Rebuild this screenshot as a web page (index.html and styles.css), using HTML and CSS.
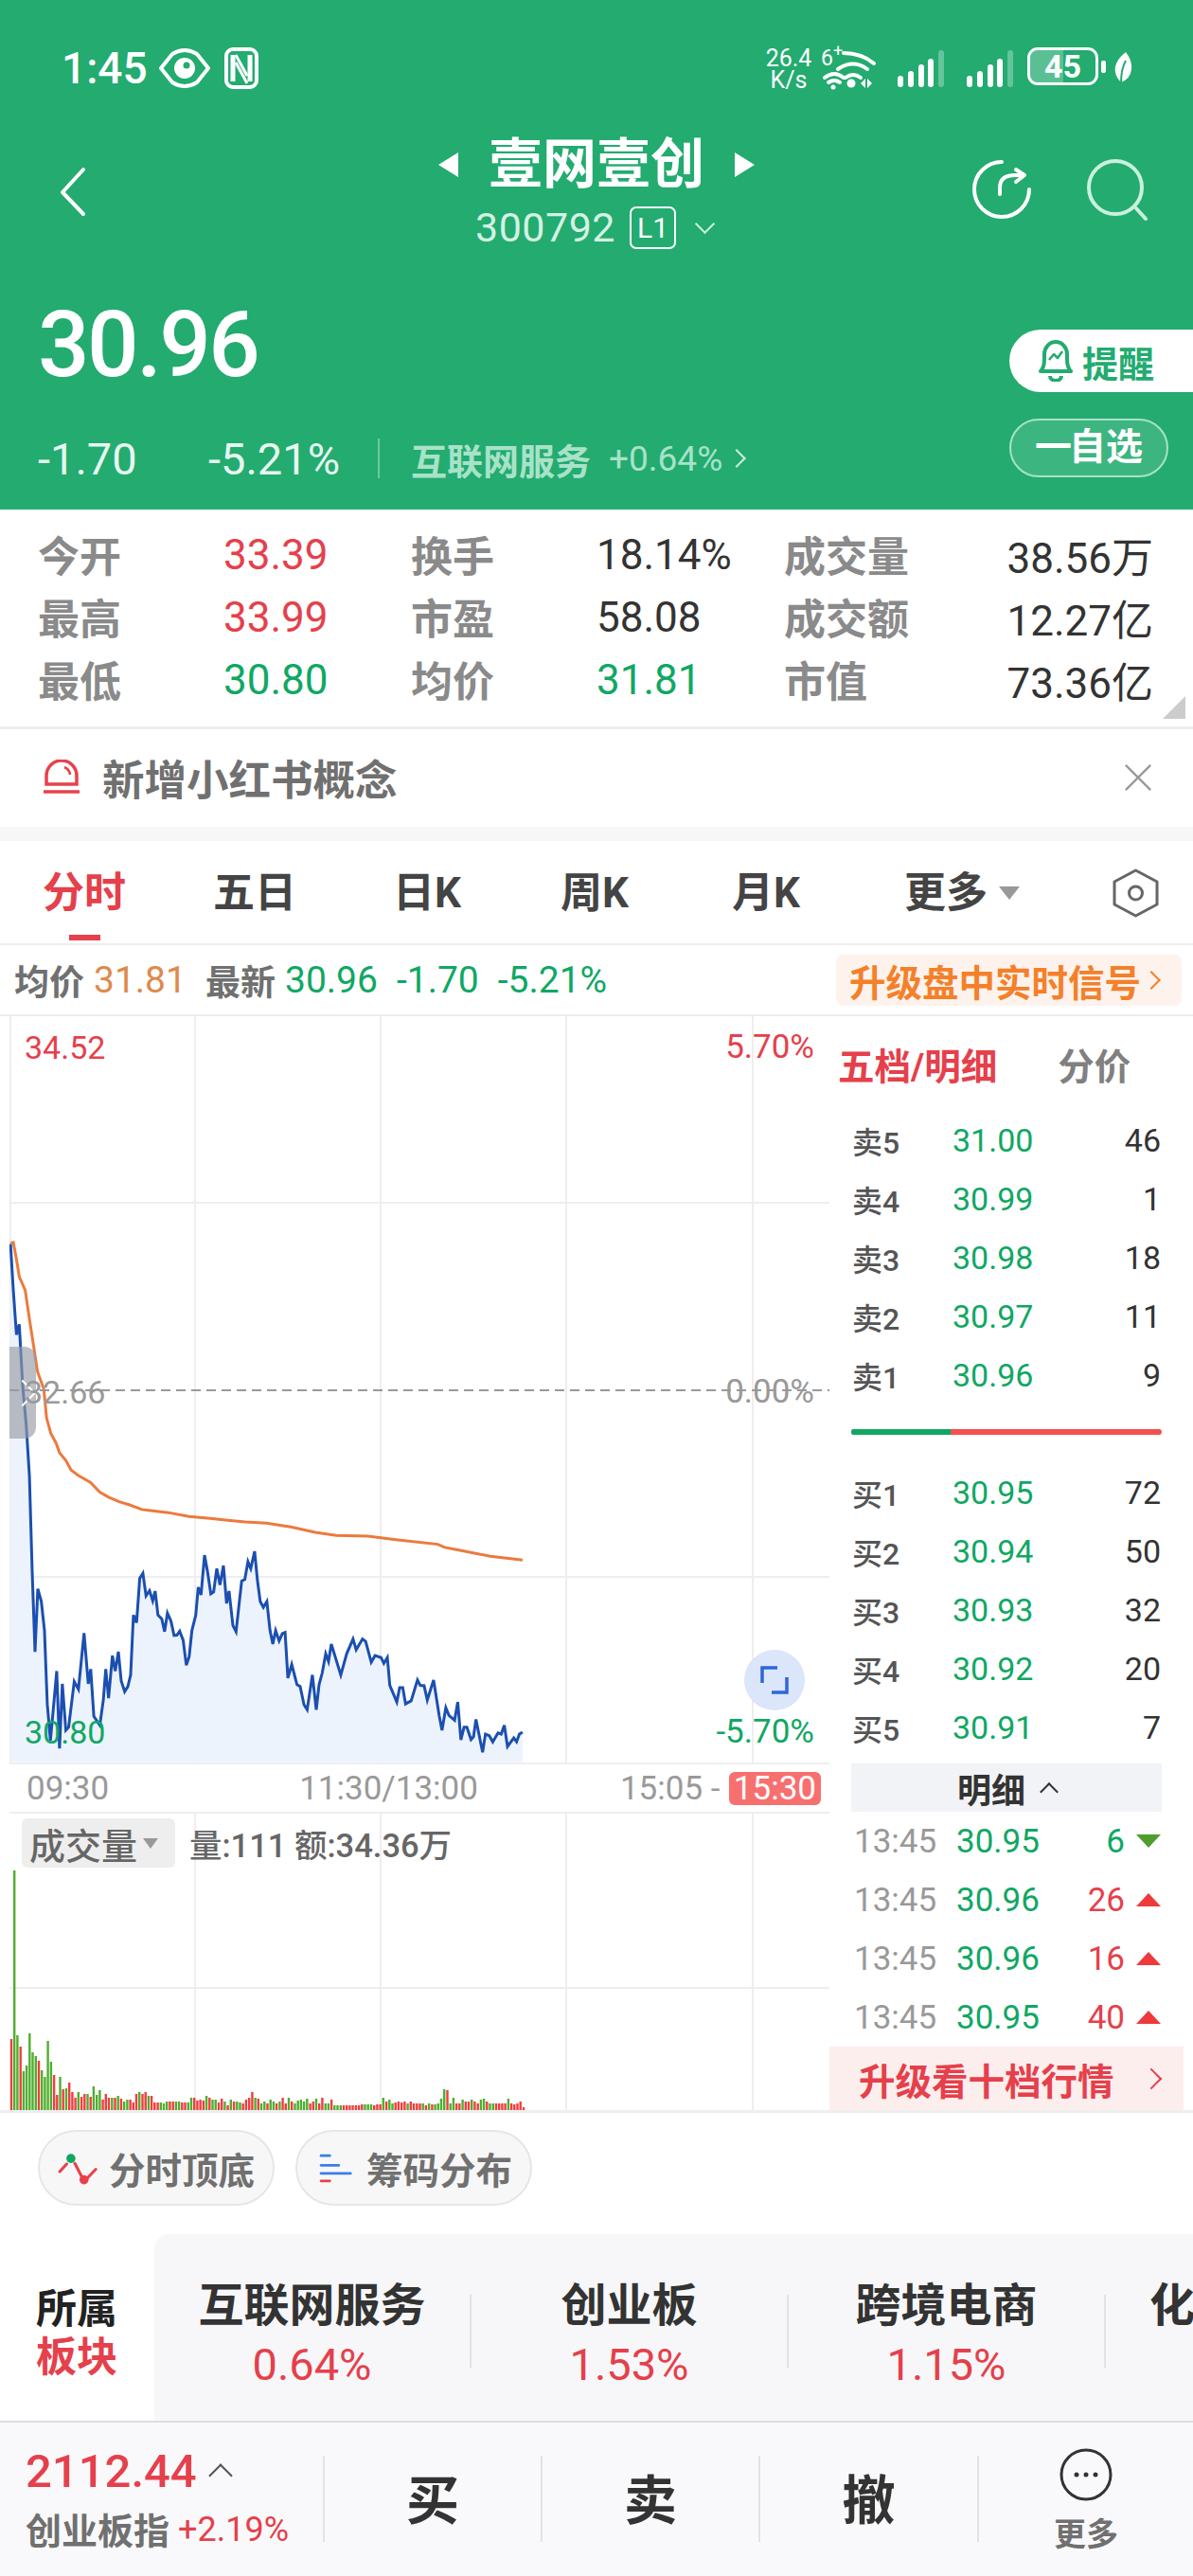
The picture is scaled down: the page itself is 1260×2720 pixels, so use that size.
FILE: index.html
```html
<!DOCTYPE html>
<html lang="zh-CN">
  <head>
    <meta charset="UTF-8" />
    <title>壹网壹创 300792</title>
    <link rel="stylesheet" href="styles.css">
  </head>
  <body>
    <div class="head">
      <div class="status">
        <div class="status-left">
          <span class="clock">1:45</span>
          <svg class="eye" viewBox="0 0 54 44"><path d="M2 22 L14 7 Q27 -1 40 7 L52 22 L40 37 Q27 45 14 37 Z" fill="none" stroke="#fff" stroke-width="4" stroke-linejoin="round"/><circle cx="27" cy="22" r="11" fill="#fff"/><circle cx="29" cy="19" r="3.5" fill="#23ab70"/></svg>
          <svg class="nfc" viewBox="0 0 36 44"><rect x="2" y="2" width="32" height="40" rx="7" fill="none" stroke="#fff" stroke-width="4"/><path d="M9 8 V36 M27 8 V36" stroke="#fff" stroke-width="5"/><path d="M12 8 L24 30 M12 16 L24 38" stroke="#fff" stroke-width="3"/></svg>
        </div>
        <div class="status-right">
          <div class="speed"><span>26.4</span><span>K/s</span></div>
          <div class="wifi">
            <span class="wifi-gen">6<sup>+</sup></span>
            <svg viewBox="868 48 62 48"><g fill="none" stroke="#fff" stroke-width="4" stroke-linecap="round"><path d="M893 54 Q912 54 925 65"/><path d="M887 71 Q903 60 918 71"/><path d="M895 80 Q903 74 911 80"/><path d="M873 80 Q883 72 893 80"/><path d="M877 85 Q883 81 889 85"/></g><circle cx="901" cy="86" r="4.5" fill="#fff"/><circle cx="882" cy="90" r="2.5" fill="#fff"/><path d="M911 86 L916 81 V91 Z M918 81 V91 L923 86 Z" fill="#fff"/></svg>
          </div>
          <svg class="signal" viewBox="0 0 49 40"><g fill="#fff"><rect x="0" y="27" width="6" height="12" rx="3"/><rect x="11" y="22" width="6" height="17" rx="3"/><rect x="22" y="15" width="6" height="24" rx="3"/><rect x="32" y="9" width="6" height="30" rx="3"/></g><rect x="43" y="0" width="6" height="39" rx="3" fill="#fff" opacity=".3"/></svg>
          <svg class="signal" viewBox="0 0 49 40"><g fill="#fff"><rect x="0" y="27" width="6" height="12" rx="3"/><rect x="11" y="22" width="6" height="17" rx="3"/><rect x="22" y="15" width="6" height="24" rx="3"/><rect x="32" y="9" width="6" height="30" rx="3"/></g><rect x="43" y="0" width="6" height="39" rx="3" fill="#fff" opacity=".3"/></svg>
          <div class="battery"><span class="battery-level"></span><span class="battery-text">45</span></div>
          <span class="battery-nub"></span>
          <svg class="leaf" viewBox="0 0 20 32"><path d="M13 0 Q20 9 19 18 Q18 28 8 32 Q0 24 2 15 Q4 7 13 0 Z" fill="#fff"/><path d="M8 32 Q8 18 13 9" fill="none" stroke="#23ab70" stroke-width="2"/></svg>
        </div>
      </div>

      <div class="nav">
        <svg class="back" viewBox="60 170 34 64"><path d="M88 179 L66 203 L88 226" fill="none" stroke="#fff" stroke-width="4" stroke-linecap="round" stroke-linejoin="round" /></svg>
        <div class="nav-title">
          <div class="title-row"><i class="tri-left"></i><h1>壹网壹创</h1><i class="tri-right"></i></div>
          <div class="code-row"><span class="code">300792</span><span class="level">L1</span><i class="caret-down"></i></div>
        </div>
        <div class="nav-icons">
          <svg class="share" viewBox="1023 166 70 70"><g fill="none" stroke="#fff" stroke-width="4" stroke-linecap="round" stroke-linejoin="round"><path d="M1058 172 A29 29 0 1 0 1087 201"/><path d="M1056 206 V199 Q1056 186 1072 186 H1081"/><path d="M1073 180 L1082 186 L1073 193"/></g></svg>
          <svg class="search" viewBox="1145 165 72 72"><g fill="none" stroke="#c9f0de" stroke-width="4" stroke-linecap="round"><circle cx="1178" cy="198" r="28"/><path d="M1200 220 L1210 231"/></g></svg>
        </div>
      </div>

      <div class="quote">
        <div>
          <div class="price">30.96</div>
          <div class="change-row">
            <span class="change">-1.70</span>
            <span class="change change-pct">-5.21%</span>
            <span class="change-sep"></span>
            <span class="board">互联网服务</span>
            <span class="board-pct">+0.64%</span>
            <i class="chev board-chev"></i>
          </div>
        </div>
        <div class="quote-btns">
          <div class="btn-alert">
            <svg viewBox="0 0 36 44"><g fill="none" stroke="#23ab70" stroke-width="4" stroke-linejoin="round"><path d="M2 33 Q6 29 6 20 V15 A12 13 0 0 1 30 15 V20 Q30 29 34 33 Z"/><path d="M12 38 A6 5 0 0 0 24 38"/><path d="M11 21 L16 15 L20 19 L25 12" stroke-width="2.5"/></g></svg>
            <span>提醒</span>
          </div>
          <div class="btn-watch"><span class="watch-dash">一</span>自选</div>
        </div>
      </div>
    </div>

    <div class="stats">
      <span class="stat-name">今开</span><span class="stat-val up">33.39</span>
      <span class="stat-name">换手</span><span class="stat-val">18.14%</span>
      <span class="stat-name">成交量</span><span class="stat-val stat-end">38.56万</span>
      <span class="stat-name">最高</span><span class="stat-val up">33.99</span>
      <span class="stat-name">市盈</span><span class="stat-val">58.08</span>
      <span class="stat-name">成交额</span><span class="stat-val stat-end">12.27亿</span>
      <span class="stat-name">最低</span><span class="stat-val down">30.80</span>
      <span class="stat-name">均价</span><span class="stat-val down">31.81</span>
      <span class="stat-name">市值</span><span class="stat-val stat-end">73.36亿</span>
      <i class="stats-corner"></i>
    </div>

    <div class="notice">
      <svg viewBox="44 804 42 38"><g fill="none" stroke="#e8414a" stroke-width="3.5"><path d="M49 830 V821 A16 16 0 0 1 81 821 V830 Z"/><path d="M68 812 A10 10 0 0 1 74 820" stroke-width="2.5"/><path d="M46 838 H84"/></g></svg>
      <span>新增小红书概念</span>
      <svg class="notice-close" viewBox="0 0 32 32"><path d="M2 2 L30 30 M30 2 L2 30" stroke="#999" stroke-width="2.5"/></svg>
    </div>

    <div class="band"></div>

    <div class="tabs">
      <span class="tab tab-active">分时</span>
      <span class="tab">五日</span>
      <span class="tab">日K</span>
      <span class="tab">周K</span>
      <span class="tab">月K</span>
      <span class="tab tab-more">更多<i class="tri-down"></i></span>
      <svg class="tab-gear" viewBox="1174 917 50 52"><g fill="none" stroke="#666" stroke-width="3"><path d="M1198.5 919 L1221 931 V955 L1198.5 967 L1176 955 V931 Z" stroke-linejoin="round"/><circle cx="1198.5" cy="943" r="7"/></g></svg>
    </div>

    <div class="info">
      <span class="info-name">均价</span><span class="info-val avg">31.81</span>
      <span class="info-name info-latest">最新</span><span class="info-val down">30.96</span>
      <span class="info-val down info-gap">-1.70</span>
      <span class="info-val down info-gap">-5.21%</span>
      <span class="upsell">升级盘中实时信号<i class="chev"></i></span>
    </div>

    <div class="market">
      <div class="market-left">
        <div class="price-chart">
          <svg viewBox="0 0 866 790" width="866" height="790">
            <g stroke="#eeeef0" stroke-width="2">
              <path d="M1 0 V790 M196 0 V790 M392 0 V790 M588 0 V790 M785 0 V790"/>
              <path d="M0 197 H866 M0 592 H866 M0 789 H866"/>
            </g>
            <g transform="translate(-10,167) scale(.3699,.40816)">
              <polygon id="priceFill" fill="#edf3fc" stroke="none"></polygon>
              <polyline id="priceLine" fill="none" stroke="#1b4fb0" stroke-width="3" vector-effect="non-scaling-stroke" points="30,180 38,300 47,415 55,388 65,550 75,650 84,780 92,1030 100,1235 108,1072 118,1105 127,1180 135,1370 144,1465 152,1385 162,1285 170,1485 178,1318 188,1438 196,1430 212,1312 224,1332 240,1187 252,1318 259,1280 268,1402 285,1425 295,1360 302,1280 310,1355 321,1245 329,1285 338,1235 346,1310 356,1338 365,1325 373,1295 381,1140 390,1160 399,1045 408,1032 417,1090 427,1077 436,1103 443,1078 451,1140 462,1150 470,1183 478,1135 488,1155 497,1193 505,1192 513,1182 523,1205 532,1270 540,1248 548,1180 559,1140 566,1068 574,1088 584,985 592,1025 602,1085 610,1080 619,1020 628,1062 638,1012 647,1110 654,1078 665,1167 674,1183 690,1052 699,1048 708,1002 716,1020 727,975 735,1050 743,1105 752,1120 762,1105 771,1180 779,1215 787,1180 797,1207 806,1188 814,1185 822,1303 833,1268 848,1320 857,1325 868,1372 877,1385 892,1295 903,1385 911,1320 920,1290 930,1240 938,1260 946,1215 973,1295 990,1240 1008,1202 1017,1230 1035,1202 1044,1208 1060,1262 1071,1245 1088,1250 1096,1265 1106,1250 1113,1322 1133,1365 1141,1328 1150,1328 1158,1370 1174,1362 1192,1308 1200,1322 1211,1323 1220,1360 1238,1308 1254,1400 1262,1438 1273,1380 1282,1400 1298,1412 1307,1365 1316,1463 1325,1430 1333,1430 1345,1462 1352,1455 1359,1410 1378,1495 1386,1448 1397,1452 1407,1468 1422,1445 1431,1448 1440,1425 1449,1480 1467,1458 1475,1468 1483,1448 1492,1443"></polyline>
              <polyline fill="none" stroke="#ec7a3e" stroke-width="3" vector-effect="non-scaling-stroke" points="30,178 38,176 47,220 55,265 72,300 85,380 97,450 107,510 125,555 133,630 145,670 160,695 170,720 188,740 203,765 225,780 258,797 285,822 310,835 340,847 370,855 405,867 430,870 480,875 540,885 600,890 650,895 700,899 760,902 830,912 900,926 960,934 1050,936 1130,945 1250,957 1270,965 1300,970 1400,988 1492,998"></polyline>
            </g>
            <path d="M0 395 H866" stroke="#999" stroke-width="2" stroke-dasharray="10 6"/>
          </svg>
          <div class="chart-handle"><i class="chev"></i></div>
          <span class="chart-label label-top-left up">34.52</span>
          <span class="chart-label label-top-right up">5.70%</span>
          <span class="chart-label label-mid-left">32.66</span>
          <span class="chart-label label-mid-right">0.00%</span>
          <span class="chart-label label-low-left down">30.80</span>
          <span class="chart-label label-low-right down">-5.70%</span>
          <div class="chart-expand">
            <svg viewBox="0 0 30 30"><path d="M2 18 V2 H18 M28 12 V28 H12" fill="none" stroke="#2f66d8" stroke-width="3.5"/></svg>
          </div>
        </div>

        <div class="axis">
          <span>09:30</span>
          <span class="axis-mid">11:30/13:00</span>
          <span class="axis-end">15:05 -</span>
          <span class="axis-badge">15:30</span>
        </div>

        <div class="vol-chart">
          <svg id="volChart" viewBox="0 0 866 315" width="866" height="315">
            <g stroke="#eeeef0" stroke-width="2">
              <path d="M196 0 V315 M392 0 V315 M588 0 V315 M785 0 V315"/>
              <path d="M0 1 H866 M0 186 H866"/>
            </g>
          </svg>
          <div class="vol-label">
            <span class="vol-pill">成交量<i class="tri-down"></i></span>
            <span class="vol-text">量:111 额:34.36万</span>
          </div>
        </div>
      </div>

      <div class="depth">
        <div class="depth-head"><span class="depth-active">五档/明细</span><span class="depth-other">分价</span></div>
        <div class="depth-row"><span class="depth-name">卖5</span><span class="depth-price">31.00</span><span class="depth-qty">46</span></div>
        <div class="depth-row"><span class="depth-name">卖4</span><span class="depth-price">30.99</span><span class="depth-qty">1</span></div>
        <div class="depth-row"><span class="depth-name">卖3</span><span class="depth-price">30.98</span><span class="depth-qty">18</span></div>
        <div class="depth-row"><span class="depth-name">卖2</span><span class="depth-price">30.97</span><span class="depth-qty">11</span></div>
        <div class="depth-row"><span class="depth-name">卖1</span><span class="depth-price">30.96</span><span class="depth-qty">9</span></div>
        <div class="depth-bar"><span class="depth-bar-sell"></span></div>
        <div class="depth-row"><span class="depth-name">买1</span><span class="depth-price">30.95</span><span class="depth-qty">72</span></div>
        <div class="depth-row"><span class="depth-name">买2</span><span class="depth-price">30.94</span><span class="depth-qty">50</span></div>
        <div class="depth-row"><span class="depth-name">买3</span><span class="depth-price">30.93</span><span class="depth-qty">32</span></div>
        <div class="depth-row"><span class="depth-name">买4</span><span class="depth-price">30.92</span><span class="depth-qty">20</span></div>
        <div class="depth-row"><span class="depth-name">买5</span><span class="depth-price">30.91</span><span class="depth-qty">7</span></div>
        <div class="detail-head">明细<i class="chev chev-up"></i></div>
        <div class="tick-row"><span class="tick-time">13:45</span><span class="tick-price">30.95</span><span class="tick-qty down">6</span><i class="tick-down"></i></div>
        <div class="tick-row"><span class="tick-time">13:45</span><span class="tick-price">30.96</span><span class="tick-qty up">26</span><i class="tick-up"></i></div>
        <div class="tick-row"><span class="tick-time">13:45</span><span class="tick-price">30.96</span><span class="tick-qty up">16</span><i class="tick-up"></i></div>
        <div class="tick-row"><span class="tick-time">13:45</span><span class="tick-price">30.95</span><span class="tick-qty up">40</span><i class="tick-up"></i></div>
        <div class="depth-upsell"><span>升级看十档行情</span><i class="chev"></i></div>
      </div>
    </div>

    <div class="pills">
      <div class="pill">
        <svg viewBox="85 95 130 100"><g fill="none" stroke="#e8414a" stroke-width="9" stroke-linecap="round"><path d="M94 155 L115 132"/><path d="M140 130 L165 178"/><path d="M177 176 L204 148"/></g><circle cx="128" cy="115" r="14" fill="#10a764"/><circle cx="168" cy="180" r="14" fill="#e8414a"/></svg>
        <span>分时顶底</span>
      </div>
      <div class="pill">
        <svg viewBox="880 90 125 110"><g fill="none" stroke-width="9" stroke-linecap="round"><path d="M894 103 H923 M894 135 H953 M894 162 H992" stroke="#3b7de8"/><path d="M894 187 H923" stroke="#e8414a"/></g></svg>
        <span>筹码分布</span>
      </div>
    </div>

    <div class="sector">
      <div class="sector-label"><span>所属</span><span class="sector-red">板块</span></div>
      <div class="sector-panel">
        <div class="sector-item"><div class="sector-name">互联网服务</div><div class="sector-pct">0.64%</div></div>
        <i class="sector-sep"></i>
        <div class="sector-item"><div class="sector-name">创业板</div><div class="sector-pct">1.53%</div></div>
        <i class="sector-sep"></i>
        <div class="sector-item"><div class="sector-name">跨境电商</div><div class="sector-pct">1.15%</div></div>
        <i class="sector-sep"></i>
        <div class="sector-name sector-cut">化</div>
      </div>
    </div>

    <div class="bottom">
      <div class="bottom-index">
        <div class="index-row"><span class="index-val">2112.44</span><i class="chev chev-up"></i></div>
        <div class="index-row"><span class="index-name">创业板指</span><span class="index-pct">+2.19%</span></div>
      </div>
      <div class="bottom-act">买</div>
      <div class="bottom-act">卖</div>
      <div class="bottom-act">撤</div>
      <div class="bottom-more">
        <svg viewBox="0 0 56 56"><circle cx="28" cy="28" r="26" fill="none" stroke="#333" stroke-width="3"/><circle cx="18" cy="28" r="2.5" fill="#333"/><circle cx="28" cy="28" r="2.5" fill="#333"/><circle cx="38" cy="28" r="2.5" fill="#333"/></svg>
        <span>更多</span>
      </div>
    </div>

    <script src="chart.js"></script>
  </body>
</html>
```

FILE: styles.css
```css
* {
  margin: 0;
  padding: 0;
  box-sizing: border-box;
}
body {
  width: 1260px;
  background: white;
  color: #333;
  font-family: Roboto, "Noto Sans CJK SC", sans-serif;
}
i {
  display: block;
  font-style: normal;
}
svg {
  display: block;
  flex: none;
}
.up {
  color: #e5404b;
}
.down {
  color: #10a764;
}

/* small shapes used all over */
.chev {
  width: 14px;
  height: 14px;
  border-top: 2.5px solid currentColor;
  border-right: 2.5px solid currentColor;
  transform: rotate(45deg);
}
.chev-up {
  transform: rotate(-45deg);
}
.tri-left,
.tri-right {
  width: 0;
  height: 0;
  border-top: 13px solid transparent;
  border-bottom: 13px solid transparent;
}
.tri-left {
  border-right: 21px solid white;
}
.tri-right {
  border-left: 21px solid white;
}
.tri-down {
  width: 0;
  height: 0;
  border-left: 11px solid transparent;
  border-right: 11px solid transparent;
  border-top: 14px solid #999;
}

/* green header */
.head {
  height: 538px;
  background: #23ab70;
  color: white;
}
.status {
  height: 144px;
  padding: 48px 64px 0 65px;
  display: flex;
  justify-content: space-between;
  align-items: flex-start;
}
.status-left {
  display: flex;
  align-items: center;
  height: 48px;
}
.clock {
  font-size: 46px;
  font-weight: 500;
  line-height: 48px;
  width: 103px;
}
.eye {
  width: 54px;
  height: 44px;
}
.nfc {
  width: 36px;
  height: 44px;
  margin-left: 15px;
}
.status-right {
  display: flex;
  align-items: flex-start;
  margin-top: 2px;
}
.speed {
  width: 54px;
  display: flex;
  flex-direction: column;
  align-items: center;
  font-size: 25px;
  line-height: 23px;
}
.wifi {
  display: flex;
  margin-left: 6px;
  position: relative;
}
.wifi svg {
  width: 62px;
  height: 48px;
}
.wifi-gen {
  position: absolute;
  left: 1px;
  top: 0;
  font-size: 23px;
  line-height: 24px;
}
.wifi-gen sup {
  font-size: 18px;
  line-height: 0;
}
.signal {
  width: 49px;
  height: 40px;
  margin-top: 3px;
  margin-left: 20px;
}
.signal + .signal {
  margin-left: 24px;
}
.battery {
  position: relative;
  width: 75px;
  height: 40px;
  margin-left: 15px;
  border: 3px solid white;
  border-radius: 11px;
  overflow: hidden;
}
.battery-level {
  display: block;
  width: 50%;
  height: 100%;
  background: rgba(255, 255, 255, 0.25);
}
.battery-text {
  position: absolute;
  top: 0;
  left: 0;
  right: 0;
  text-align: center;
  font-size: 34px;
  font-weight: 700;
  line-height: 34px;
}
.battery-nub {
  width: 5px;
  height: 13px;
  margin: 14px 0 0 3px;
  background: white;
  border-radius: 2px;
}
.leaf {
  width: 20px;
  height: 32px;
  margin: 5px 0 0 8px;
}
.nav {
  height: 126px;
  display: grid;
  grid-template-columns: 1fr auto 1fr;
}
.back {
  width: 34px;
  height: 64px;
  margin: 26px 0 0 60px;
}
.title-row {
  display: flex;
  align-items: center;
  justify-content: center;
  gap: 32px;
  height: 60px;
}
.title-row h1 {
  font-size: 57px;
  font-weight: 700;
  line-height: 60px;
}
.code-row {
  display: flex;
  align-items: center;
  justify-content: center;
  height: 48px;
  margin-top: 12px;
  margin-left: -6px;
}
.code {
  font-size: 43px;
  letter-spacing: 0.5px;
  color: #d4f1e3;
}
.level {
  width: 49px;
  height: 45px;
  margin-left: 15px;
  border: 2px solid white;
  border-radius: 7px;
  font-size: 30px;
  line-height: 41px;
  text-align: center;
}
.caret-down {
  width: 15px;
  height: 15px;
  margin: -8px 0 0 23px;
  border-right: 2px solid #d4f1e3;
  border-bottom: 2px solid #d4f1e3;
  transform: rotate(45deg);
}
.nav-icons {
  display: flex;
  justify-content: flex-end;
  padding: 21px 43px 0 0;
  gap: 52px;
}
.share,
.search {
  width: 70px;
  height: 70px;
}
.search {
  width: 72px;
  height: 72px;
}
.quote {
  height: 268px;
  display: flex;
  justify-content: space-between;
}
.price {
  margin: 46px 0 0 40px;
  font-size: 96px;
  font-weight: 500;
  line-height: 96px;
  letter-spacing: -2.5px;
}
.change-row {
  display: flex;
  align-items: center;
  height: 44px;
  margin: 50px 0 0 40px;
}
.change {
  font-size: 47px;
  color: #e6f7ef;
  width: 180px;
}
.change-pct {
  width: 179px;
}
.change-sep {
  width: 2px;
  height: 42px;
  background: rgba(255, 255, 255, 0.35);
}
.board {
  margin-left: 33px;
  font-size: 38px;
  font-weight: 700;
  color: #a8e2c8;
}
.board-pct {
  margin-left: 19px;
  font-size: 37px;
  color: #a8e2c8;
}
.board-chev {
  margin-left: 8px;
  color: #c9f0de;
}
.quote-btns {
  width: 194px;
  padding-top: 78px;
}
.btn-alert {
  display: flex;
  align-items: center;
  height: 66px;
  padding-left: 31px;
  background: white;
  border-radius: 33px 0 0 33px;
  color: #23ab70;
  font-size: 38px;
  font-weight: 700;
}
.btn-alert svg {
  width: 36px;
  height: 44px;
  margin-right: 10px;
}
.btn-watch {
  width: 168px;
  height: 62px;
  margin-top: 28px;
  border: 2px solid #a8e2c8;
  border-radius: 31px;
  background: rgba(255, 255, 255, 0.12);
  font-size: 39px;
  font-weight: 700;
  line-height: 56px;
  text-align: center;
}
.watch-dash {
  letter-spacing: -3px;
}

/* stats table */
.stats {
  position: relative;
  height: 232px;
  padding: 14px 42px 0 40px;
  display: grid;
  grid-template-columns: 196px 198px 196px 198px 196px 1fr;
  grid-auto-rows: 66px;
  align-items: center;
  border-bottom: 3px solid #eeeeee;
}
.stat-name {
  font-size: 44px;
  font-weight: 700;
  color: #8a8a8a;
}
.stat-val {
  margin-top: 2px;
  font-size: 44px;
  color: #333;
  white-space: nowrap;
}
.stat-val.up {
  color: #e5404b;
}
.stat-val.down {
  color: #10a764;
}
.stat-end {
  justify-self: end;
}
.stats-corner {
  position: absolute;
  right: 8px;
  bottom: 8px;
  width: 0;
  height: 0;
  border-left: 24px solid transparent;
  border-bottom: 24px solid #cccccc;
}

.notice {
  height: 103px;
  display: flex;
  align-items: center;
  padding: 0 43px 2px 44px;
  font-size: 44.5px;
  font-weight: 700;
  color: #707070;
}
.notice svg {
  width: 42px;
  height: 38px;
}
.notice span {
  margin-left: 22px;
}
.notice svg.notice-close {
  width: 30px;
  height: 30px;
  margin-left: auto;
}
.band {
  height: 15px;
  background: #f7f7f7;
}

/* period tabs */
.tabs {
  height: 110px;
  display: grid;
  grid-template-columns: 180px 190px 177px 181px 182px 220px auto;
  align-items: center;
  padding: 2px 0 0 45px;
  border-bottom: 2px solid #eeeeee;
}
.tab {
  position: relative;
  font-size: 44px;
  font-weight: 700;
  color: #444;
  line-height: 60px;
}
.tab-active {
  color: #e5404b;
}
.tab-active::after {
  content: "";
  position: absolute;
  left: 28px;
  top: 74px;
  width: 33px;
  height: 6px;
  background: #e5404b;
}
.tab-more {
  display: flex;
  align-items: center;
}
.tab-more .tri-down {
  margin-left: 12px;
}
.tab-gear {
  width: 50px;
  height: 52px;
}

.info {
  height: 73px;
  display: flex;
  align-items: center;
  padding-left: 15px;
}
.info-name {
  font-size: 37px;
  font-weight: 700;
  color: #707070;
}
.info-val {
  margin-left: 10px;
  font-size: 39px;
}
.avg {
  color: #dd8a4c;
}
.info-latest {
  margin-left: 20px;
}
.info-gap {
  margin-left: 20px;
}
.upsell {
  display: flex;
  align-items: center;
  width: 365px;
  height: 54px;
  margin: 0 12px 0 auto;
  padding: 0 0 0 14px;
  background: #fdf3ec;
  border-radius: 8px;
  color: #f4802a;
  font-size: 38.5px;
  font-weight: 700;
}
.upsell .chev {
  margin-left: 4px;
}

/* chart area */
.market {
  display: flex;
  padding-left: 10px;
  border-top: 2px solid #eeeeee;
}
.market-left {
  width: 866px;
}
.price-chart {
  position: relative;
  height: 790px;
  overflow: hidden;
}
.chart-label {
  position: absolute;
  font-size: 34px;
  line-height: 40px;
  color: #999;
}
.chart-label.up {
  color: #e5404b;
}
.chart-label.down {
  color: #10a764;
}
.label-top-left,
.label-mid-left,
.label-low-left {
  left: 16px;
}
.label-top-right,
.label-mid-right,
.label-low-right {
  right: 16px;
  font-size: 35px;
}
.label-top-left,
.label-top-right {
  top: 13px;
}
.label-mid-left,
.label-mid-right {
  top: 377px;
}
.label-low-left,
.label-low-right {
  top: 736px;
}
.chart-handle {
  position: absolute;
  left: 0;
  top: 349px;
  width: 28px;
  height: 97px;
  display: flex;
  align-items: center;
  justify-content: center;
  background: rgba(150, 155, 165, 0.65);
  border-radius: 0 12px 12px 0;
  color: white;
}
.chart-handle .chev {
  width: 20px;
  height: 20px;
  border-width: 2px;
}
.chart-expand {
  position: absolute;
  left: 776px;
  top: 669px;
  width: 64px;
  height: 64px;
  display: flex;
  align-items: center;
  justify-content: center;
  border-radius: 50%;
  background: #dbe6fb;
}
.chart-expand svg {
  width: 30px;
  height: 30px;
}
.axis {
  height: 50px;
  display: flex;
  align-items: center;
  padding-left: 18px;
  font-size: 35px;
  color: #999;
}
.axis-mid {
  margin-left: 201px;
}
.axis-end {
  margin-left: 150px;
}
.axis-badge {
  margin-left: auto;
  margin-right: 9px;
  padding: 0 5px;
  height: 35px;
  line-height: 35px;
  background: #f77070;
  border-radius: 6px;
  color: white;
  font-size: 35px;
}
.vol-chart {
  position: relative;
  height: 315px;
}
.vol-label {
  position: absolute;
  left: 13px;
  top: 7px;
  display: flex;
  align-items: center;
  color: #666;
}
.vol-pill {
  display: flex;
  align-items: center;
  width: 162px;
  height: 52px;
  padding-left: 8px;
  background: #eeeeee;
  border-radius: 6px;
  font-size: 38px;
  font-weight: 500;
}
.vol-pill .tri-down {
  margin-left: 6px;
  border-left-width: 8px;
  border-right-width: 8px;
  border-top-width: 11px;
}
.vol-text {
  margin-left: 15px;
  font-size: 34.5px;
  font-weight: 500;
}

/* order book */
.depth {
  width: 374px;
}
.depth-head {
  height: 100px;
  display: flex;
  align-items: center;
  padding: 0 0 0 9px;
  font-size: 38.5px;
  font-weight: 700;
}
.depth-active {
  color: #e5404b;
}
.depth-other {
  margin-left: 64px;
  color: #808080;
}
.depth-row {
  height: 62px;
  margin-left: 24px;
  margin-right: 24px;
  display: grid;
  grid-template-columns: 106px 1fr auto;
  align-items: center;
  font-size: 34px;
}
.depth-name {
  color: #555;
  font-size: 32px;
  font-weight: 500;
}
.depth-price {
  color: #10a764;
}
.depth-qty {
  color: #333;
}
.depth-bar {
  height: 6px;
  margin: 26px 23px 30px 23px;
  background: #f45050;
  border-radius: 3px;
  overflow: hidden;
}
.depth-bar-sell {
  display: block;
  width: 32%;
  height: 100%;
  background: #10a764;
}
.detail-head {
  height: 51px;
  margin: 7px 23px 0 23px;
  display: flex;
  align-items: center;
  justify-content: center;
  background: #f2f3f7;
  font-size: 36px;
  font-weight: 700;
  color: #333;
}
.detail-head .chev {
  margin: 8px 0 0 18px;
  font-weight: 400;
}
.tick-row {
  height: 62px;
  padding: 0 24px 0 26px;
  display: flex;
  align-items: center;
  font-size: 35px;
}
.tick-time {
  color: #999;
  width: 108px;
}
.tick-price {
  color: #10a764;
  width: 100px;
}
.tick-qty {
  margin-left: auto;
}
.tick-up,
.tick-down {
  width: 0;
  height: 0;
  margin-left: 12px;
  border-left: 13px solid transparent;
  border-right: 13px solid transparent;
}
.tick-up {
  border-bottom: 14px solid #ee3a3a;
}
.tick-down {
  border-top: 14px solid #4f9e2d;
}
.depth-upsell {
  height: 67px;
  display: flex;
  align-items: center;
  padding: 0 26px 0 31px;
  background: #fdeeee;
  color: #e5404b;
  font-size: 38.5px;
  font-weight: 700;
}
.depth-upsell .chev {
  margin-left: auto;
  width: 16px;
  height: 16px;
}

.pills {
  height: 131px;
  display: flex;
  gap: 22px;
  padding: 18px 0 0 40px;
  border-top: 3px solid #eeeeee;
}
.pill {
  width: 250px;
  height: 80px;
  display: flex;
  align-items: center;
  padding-left: 18px;
  background: #f7f7f7;
  border: 2px solid #e6e6e6;
  border-radius: 40px;
  font-size: 38.5px;
  font-weight: 700;
  color: #707070;
}
.pill svg {
  width: 45px;
  height: 35px;
  margin-right: 10px;
}

/* related sectors */
.sector {
  height: 197px;
  display: flex;
  overflow: hidden;
}
.sector-label {
  width: 163px;
  padding: 54px 0 0 38px;
  display: flex;
  flex-direction: column;
  font-size: 43px;
  font-weight: 700;
  line-height: 51px;
  color: #222;
}
.sector-red {
  color: #e5404b;
}
.sector-panel {
  flex: 1;
  display: flex;
  align-items: flex-start;
  background: #f7f7f9;
  border-radius: 16px 0 0 0;
  overflow: hidden;
}
.sector-item {
  width: 333px;
  flex: none;
  padding-top: 46px;
  text-align: center;
}
.sector-name {
  font-size: 48px;
  font-weight: 700;
  line-height: 60px;
  color: #333;
}
.sector-pct {
  margin-top: 7px;
  font-size: 47px;
  line-height: 50px;
  color: #e5404b;
}
.sector-sep {
  width: 2px;
  height: 77px;
  margin-top: 64px;
  background: #e2e2e4;
  flex: none;
}
.sector-cut {
  padding: 46px 0 0 46px;
}

/* bottom bar */
.bottom {
  height: 164px;
  padding-top: 35px;
  display: grid;
  grid-template-columns: 343px 230px 230px 231px 1fr;
  grid-template-rows: 91px;
  background: #f9f9fb;
  border-top: 2px solid #dddddd;
}
.bottom-index {
  padding-left: 27px;
  border-right: 2px solid #e2e2e4;
}
.index-row {
  display: flex;
  align-items: center;
}
.index-val {
  margin-top: -11px;
  font-size: 49px;
  font-weight: 500;
  line-height: 56px;
  color: #e5404b;
}
.index-row .chev {
  margin: -4px 0 0 16px;
  width: 18px;
  height: 18px;
  color: #555;
}
.index-name {
  margin-top: 4px;
  font-size: 38px;
  font-weight: 700;
  color: #707070;
}
.index-pct {
  margin: 6px 0 0 9px;
  font-size: 36px;
  color: #e5404b;
}
.bottom-act {
  border-right: 2px solid #e2e2e4;
  font-size: 56px;
  font-weight: 700;
  line-height: 97px;
  text-align: center;
  color: #333;
}
.bottom-more {
  display: flex;
  flex-direction: column;
  align-items: center;
  margin-top: -8px;
  font-size: 34px;
  font-weight: 700;
  color: #707070;
}
.bottom-more svg {
  width: 56px;
  height: 56px;
}
.bottom-more span {
  margin-top: 8px;
}
```

FILE: chart.js
```js
// fill under the price line
const priceLine = document.getElementById("priceLine");
document
  .getElementById("priceFill")
  .setAttribute("points", priceLine.getAttribute("points") + " 1492,1520 30,1520");

// volume bars, one per slot: positive is red, negative is green
const volumes = [
  75, -253, -79, 67, -41, -47, -81, -61, -57, 52, -42, -35, -73, -51, 37, 16, -35, 22, -23, 29,
  19, 13, -19, 14, 17, -17, 14, -25, -16, -21, 11, 17, 13, -13, 13, -15, 12, -9, -11, 11,
  8, 17, -19, 17, 19, -15, 15, 8, 8, -8, -7, -9, 9, 9, -9, -9, 8, 8, -8, -13,
  13, 10, 11, 10, -15, 13, -11, -11, 8, 12, -9, 5, -11, 9, -9, -8, 7, 11, 13, 19,
  -13, 12, -7, -9, 7, -11, -9, 7, -9, 13, 7, -13, 9, -7, -10, -11, -9, -12, 7, 9,
  -12, 7, 13, -7, -7, 11, -5, -5, -5, 5, 5, 5, 5, 5, 5, 6, -6, -6, -6, 5,
  6, 6, -13, 9, -11, -7, 8, 9, 8, 9, -7, 9, 7, 7, 7, -7, 5, -7, 6, -6,
  -7, -12, -22, 21, -7, -13, 7, 7, -11, 9, 9, -11, 9, 7, -11, -12, 9, -7, -7, 7,
  7, 7, 7, -12, 7, 6, 7, 9, 3
];

let redPath = "";
let greenPath = "";
volumes.forEach((v, i) => {
  const x = (2 + i * 3.22).toFixed(1);
  const seg = `M${x} 315 V${315 - Math.abs(v)} `;
  if (v > 0) {
    redPath += seg;
  } else {
    greenPath += seg;
  }
});

const volChart = document.getElementById("volChart");
[[redPath, "#f03e3e"], [greenPath, "#4fae2e"]].forEach(([d, color]) => {
  const path = document.createElementNS("http://www.w3.org/2000/svg", "path");
  path.setAttribute("d", d);
  path.setAttribute("stroke", color);
  path.setAttribute("stroke-width", "2.4");
  volChart.appendChild(path);
});
```
